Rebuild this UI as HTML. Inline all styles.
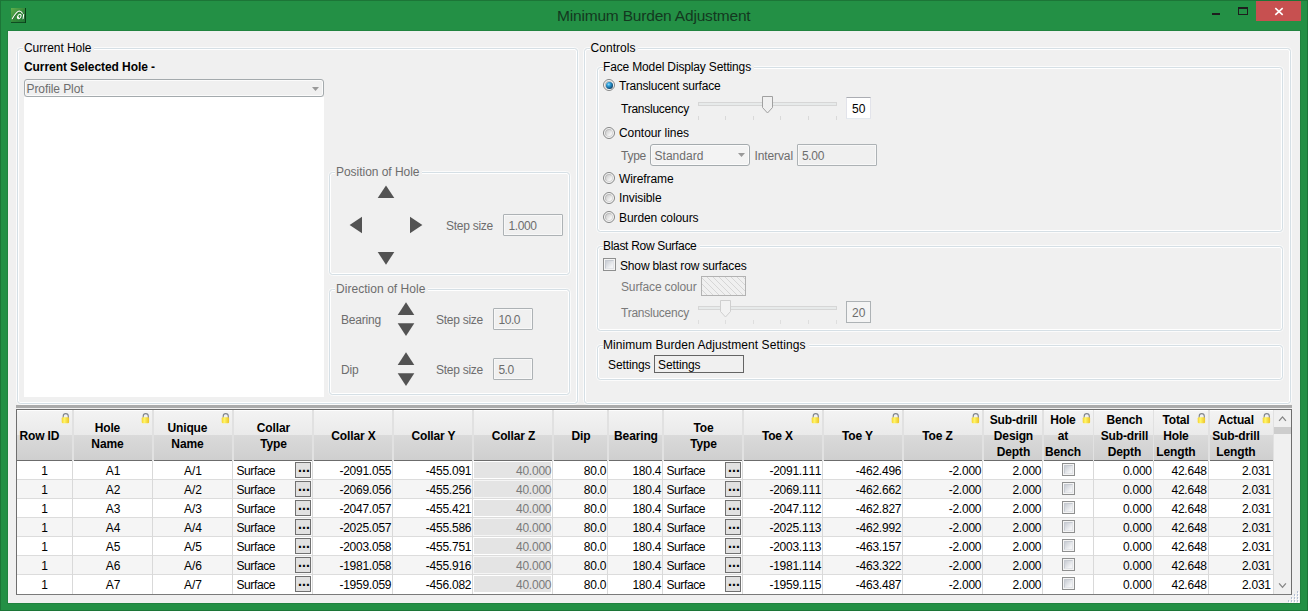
<!DOCTYPE html>
<html><head><meta charset="utf-8"><title>Minimum Burden Adjustment</title>
<style>
html,body{margin:0;padding:0}
body{width:1308px;height:611px;overflow:hidden;position:relative;background:#239045;font-family:"Liberation Sans", sans-serif;font-size:12px;color:#000}
body div,body span.tx,body svg{position:absolute;box-sizing:border-box}
.tx{white-space:nowrap;color:#000}
.b{font-weight:bold}
.g{color:#6d6d6d}
.g2{color:#7a7a7a}
.gb{border:1px solid #fbfbfb;border-radius:4.5px}
.gb i{position:absolute;left:0;top:0;right:0;bottom:0;border:1px solid #d5dfe5;border-radius:3.5px;box-shadow:inset 0 0 0 1px #fff}

.ttl{color:#133820}
.tb{border:1px solid #adb2b5;background:#f0f0f0;box-shadow:inset 0 0 0 1px #f8f8f8;border-radius:1px}
.tri{fill:#535353}
.hdr{background:linear-gradient(#f3f3f3 0,#eaeaea 24px,#dadada 24px,#cfcfcf 49px);border-top:1px solid #fdfdfd;border-bottom:1px solid #6c6c6c}
.cell{border-right:1px solid #d9d9d9}
.btn{border:1px solid #707070;background:#e1e1e1}
.cb{border:1px solid #8e8f8f;background:#f4f4f4}
.cb i{position:absolute;left:1px;top:1px;right:1px;bottom:1px;border:1px solid #c6cad1;border-right-color:#e2e4e8;border-bottom-color:#e2e4e8;background:linear-gradient(135deg,#c8ccd3,#f2f3f5 80%)}
.rad{border-radius:50%;border:1px solid #858686;background:#f7f7f7}
.rad i{position:absolute;left:1px;top:1px;right:1px;bottom:1px;border-radius:50%;border:1px solid #bcbcbc;border-right-color:#d8d8d8;border-bottom-color:#d8d8d8;background:linear-gradient(135deg,#cbcbcb,#f4f4f4 75%)}

</style></head><body>
<div style="left:0px;top:0px;width:1308px;height:611px;border:1px solid #1c7537"></div>
<div style="left:8px;top:31px;width:1292px;height:572px;background:#f0f0f0;box-shadow:0 0 0 1px #20833f"></div>
<svg style="left:11px;top:8px" width="15" height="15" viewBox="0 0 15 15"><defs><linearGradient id="ig" x1="0" y1="0" x2="1" y2="1"><stop offset="0" stop-color="#61b04d"/><stop offset="0.5" stop-color="#34893a"/><stop offset="1" stop-color="#1b7534"/></linearGradient></defs><rect width="15" height="15" fill="url(#ig)"/><rect x="0" y="14" width="15" height="1" fill="#0f4c21"/><rect x="14" y="0" width="1" height="15" fill="#0b3d1a"/><path d="M1.8 11.2 C4 7.4 6.4 3.5 8.9 3.4 C10.2 3.4 11.2 4.4 11.9 5.8 M13.2 6.9 L12.6 11.3" fill="none" stroke="#0c4019" stroke-width="1.1" stroke-linecap="round" opacity="0.55"/><path d="M1.3 10.7 C3.5 6.9 5.9 3 8.4 2.9 C9.7 2.9 10.7 3.9 11.4 5.3 M12.7 6.4 L12.1 10.8" fill="none" stroke="#fff" stroke-width="1.05" stroke-linecap="round"/><ellipse cx="8.3" cy="8.5" rx="1.5" ry="2.3" transform="rotate(30 8.3 8.5)" fill="none" stroke="#fff" stroke-width="0.95"/><ellipse cx="6.9" cy="9.5" rx="1.1" ry="1.0" fill="#fff"/></svg>
<div style="left:1212px;top:13px;width:8px;height:2px;background:#1e1e1e"></div>
<div style="left:1238px;top:7px;width:10px;height:8px;border:1px solid #1e1e1e;border-top-width:2px"></div>
<div style="left:1256px;top:1px;width:45px;height:20px;background:#c75050"></div>
<svg style="left:1274px;top:7px" width="10" height="9" viewBox="0 0 10 9"><path d="M1.3 1.1 L8.7 7.9 M8.7 1.1 L1.3 7.9" stroke="#fff" stroke-width="1.6" fill="none"/></svg>
<div class="gb" style="left:16px;top:47px;width:563px;height:358px"><i></i></div>
<div style="left:23px;top:43px;width:70.5px;height:10px;background:#f0f0f0"></div>
<div style="left:24px;top:79px;width:300px;height:18px;border:1px solid #a4aaad;border-radius:3px;background:#f0f0f0;box-shadow:inset 0 0 0 1px #fbfbfb"></div>
<svg style="left:312px;top:87px" width="7" height="4" viewBox="0 0 7 4"><path d="M0 0 L7 0 L3.5 4 Z" fill="#999"/></svg>
<div style="left:24px;top:97px;width:300px;height:300px;background:#fff"></div>
<div class="gb" style="left:328px;top:171px;width:243px;height:105px"><i></i></div>
<div style="left:335px;top:167px;width:86.5px;height:10px;background:#f0f0f0"></div>
<div class="tb" style="left:503px;top:214px;width:60px;height:22px;"></div>
<div class="gb" style="left:328px;top:288px;width:243px;height:108px"><i></i></div>
<div style="left:335px;top:284px;width:92.5px;height:10px;background:#f0f0f0"></div>
<div class="tb" style="left:493px;top:308px;width:40px;height:22px;"></div>
<div class="tb" style="left:493px;top:358px;width:40px;height:22px;"></div>
<svg style="left:0;top:0" width="1308" height="611"><polygon class="tri" points="386,185.5 394.3,198 377.7,198"/><polygon class="tri" points="386,264.8 394.3,252 377.7,252"/><polygon class="tri" points="349.6,225 362,216.8 362,233.2"/><polygon class="tri" points="422.4,225 410,216.8 410,233.2"/><polygon class="tri" points="406,302.3 414.3,315 397.7,315"/><polygon class="tri" points="406,336 414.3,323.2 397.7,323.2"/><polygon class="tri" points="406,352.3 414.3,365 397.7,365"/><polygon class="tri" points="406,386 414.3,373.2 397.7,373.2"/></svg>
<div class="gb" style="left:583px;top:47px;width:709px;height:358px"><i></i></div>
<div style="left:590px;top:43px;width:48px;height:10px;background:#f0f0f0"></div>
<div class="gb" style="left:596px;top:66px;width:688px;height:167px"><i></i></div>
<div style="left:603px;top:62px;width:151px;height:10px;background:#f0f0f0"></div>
<div class="rad" style="left:603px;top:79px;width:12px;height:12px;"><i></i></div>
<div style="left:605.5px;top:81.5px;width:7px;height:7px;border-radius:50%;background:radial-gradient(circle at 38% 34%,#8edcff 0,#2f9fd8 26%,#1a6ea3 52%,#113e5f 76%,#1e425c 100%)"></div>
<div style="left:698px;top:102px;width:139px;height:4px;border:1px solid #d6d6d6;background:#e7eaea"></div>
<svg style="left:762px;top:96px" width="11" height="18" viewBox="0 0 11 18"><path d="M0.5 0.5 H10.5 V11.5 L5.5 17 L0.5 11.5 Z" fill="#f0f0f0" stroke="#a0a0a0"/></svg>
<div style="left:698px;top:116px;width:1px;height:4px;background:#d9d9d9"></div>
<div style="left:725px;top:116px;width:1px;height:4px;background:#d9d9d9"></div>
<div style="left:753px;top:116px;width:1px;height:4px;background:#d9d9d9"></div>
<div style="left:780px;top:116px;width:1px;height:4px;background:#d9d9d9"></div>
<div style="left:808px;top:116px;width:1px;height:4px;background:#d9d9d9"></div>
<div style="left:836px;top:116px;width:1px;height:4px;background:#d9d9d9"></div>
<div style="left:846px;top:97px;width:25px;height:22px;border:1px solid #e2e3ea;border-top-color:#abadb3;border-bottom-color:#e3e9ef;background:#fff"></div>
<div class="rad" style="left:603px;top:127px;width:12px;height:12px;"><i></i></div>
<div style="left:650px;top:144px;width:100px;height:22px;border:1px solid #a4aaad;border-radius:3px;background:#f3f3f3;box-shadow:inset 0 0 0 1px #fbfbfb"></div>
<svg style="left:738px;top:153px" width="7" height="4" viewBox="0 0 7 4"><path d="M0 0 L7 0 L3.5 4 Z" fill="#999"/></svg>
<div class="tb" style="left:797px;top:144px;width:80px;height:22px;"></div>
<div class="rad" style="left:603px;top:172px;width:12px;height:12px;"><i></i></div>
<div class="rad" style="left:603px;top:191.5px;width:12px;height:12px;"><i></i></div>
<div class="rad" style="left:603px;top:211px;width:12px;height:12px;"><i></i></div>
<div class="gb" style="left:596px;top:245px;width:688px;height:87px"><i></i></div>
<div style="left:603px;top:241px;width:96.5px;height:10px;background:#f0f0f0"></div>
<div class="cb" style="left:603px;top:258px;width:13px;height:13px;"><i></i></div>
<div style="left:701px;top:276px;width:45px;height:20px;border:1px solid #b2b2b2;background:repeating-linear-gradient(45deg,#f0f0f0 0,#f0f0f0 3.34px,#d6d6d6 3.34px,#d6d6d6 4.24px)"></div>
<div style="left:698px;top:306px;width:139px;height:4px;border:1px solid #d6d6d6;background:#e7eaea"></div>
<svg style="left:720px;top:300px" width="11" height="18" viewBox="0 0 11 18"><path d="M0.5 0.5 H10.5 V11.5 L5.5 17 L0.5 11.5 Z" fill="#f2f2f2" stroke="#cfcfcf"/></svg>
<div style="left:698px;top:320px;width:1px;height:4px;background:#dedede"></div>
<div style="left:725px;top:320px;width:1px;height:4px;background:#dedede"></div>
<div style="left:753px;top:320px;width:1px;height:4px;background:#dedede"></div>
<div style="left:780px;top:320px;width:1px;height:4px;background:#dedede"></div>
<div style="left:808px;top:320px;width:1px;height:4px;background:#dedede"></div>
<div style="left:836px;top:320px;width:1px;height:4px;background:#dedede"></div>
<div style="left:846px;top:301px;width:25px;height:22px;border:1px solid #adb2b5;background:#f4f4f4"></div>
<div class="gb" style="left:596px;top:344px;width:688px;height:37px"><i></i></div>
<div style="left:603px;top:340px;width:205.5px;height:10px;background:#f0f0f0"></div>
<div style="left:654px;top:355px;width:90px;height:18px;border:1px solid #646464;background:#f0f0f0"></div>
<div style="left:16px;top:405px;width:1276px;height:3px;background:#ababab"></div>
<div style="left:16px;top:409px;width:1276px;height:186px;border:1px solid #6e6e6e;border-bottom-color:#7a7a7a;background:#fff"></div>
<div style="left:17px;top:410px;width:1257px;height:51px;background:#e1e1e1"></div>
<div class="hdr" style="left:17px;top:410px;width:55px;height:51px;"></div>
<svg style="left:61px;top:413px" width="9" height="11" viewBox="0 0 9 11"><defs><linearGradient id="lk0" x1="0" y1="0" x2="1" y2="0"><stop offset="0" stop-color="#f5d033"/><stop offset="0.35" stop-color="#fff766"/><stop offset="1" stop-color="#ecc22a"/></linearGradient></defs><path d="M2.2 5 V3.2 C2.2 -0.2 7.3 -0.2 7.3 3.2 V5" fill="none" stroke="#80858c" stroke-width="1.1"/><rect x="0.7" y="4.2" width="7.4" height="6" rx="1.2" fill="url(#lk0)"/></svg>
<div class="hdr" style="left:74px;top:410px;width:78px;height:51px;"></div>
<svg style="left:141px;top:413px" width="9" height="11" viewBox="0 0 9 11"><defs><linearGradient id="lk1" x1="0" y1="0" x2="1" y2="0"><stop offset="0" stop-color="#f5d033"/><stop offset="0.35" stop-color="#fff766"/><stop offset="1" stop-color="#ecc22a"/></linearGradient></defs><path d="M2.2 5 V3.2 C2.2 -0.2 7.3 -0.2 7.3 3.2 V5" fill="none" stroke="#80858c" stroke-width="1.1"/><rect x="0.7" y="4.2" width="7.4" height="6" rx="1.2" fill="url(#lk1)"/></svg>
<div class="hdr" style="left:154px;top:410px;width:78px;height:51px;"></div>
<svg style="left:221px;top:413px" width="9" height="11" viewBox="0 0 9 11"><defs><linearGradient id="lk2" x1="0" y1="0" x2="1" y2="0"><stop offset="0" stop-color="#f5d033"/><stop offset="0.35" stop-color="#fff766"/><stop offset="1" stop-color="#ecc22a"/></linearGradient></defs><path d="M2.2 5 V3.2 C2.2 -0.2 7.3 -0.2 7.3 3.2 V5" fill="none" stroke="#80858c" stroke-width="1.1"/><rect x="0.7" y="4.2" width="7.4" height="6" rx="1.2" fill="url(#lk2)"/></svg>
<div class="hdr" style="left:234px;top:410px;width:78px;height:51px;"></div>
<div class="hdr" style="left:314px;top:410px;width:78px;height:51px;"></div>
<div class="hdr" style="left:394px;top:410px;width:78px;height:51px;"></div>
<div class="hdr" style="left:474px;top:410px;width:78px;height:51px;"></div>
<div class="hdr" style="left:554px;top:410px;width:53px;height:51px;"></div>
<div class="hdr" style="left:609px;top:410px;width:53px;height:51px;"></div>
<div class="hdr" style="left:664px;top:410px;width:78px;height:51px;"></div>
<div class="hdr" style="left:744px;top:410px;width:78px;height:51px;"></div>
<svg style="left:811px;top:413px" width="9" height="11" viewBox="0 0 9 11"><defs><linearGradient id="lk10" x1="0" y1="0" x2="1" y2="0"><stop offset="0" stop-color="#f5d033"/><stop offset="0.35" stop-color="#fff766"/><stop offset="1" stop-color="#ecc22a"/></linearGradient></defs><path d="M2.2 5 V3.2 C2.2 -0.2 7.3 -0.2 7.3 3.2 V5" fill="none" stroke="#80858c" stroke-width="1.1"/><rect x="0.7" y="4.2" width="7.4" height="6" rx="1.2" fill="url(#lk10)"/></svg>
<div class="hdr" style="left:824px;top:410px;width:78px;height:51px;"></div>
<svg style="left:891px;top:413px" width="9" height="11" viewBox="0 0 9 11"><defs><linearGradient id="lk11" x1="0" y1="0" x2="1" y2="0"><stop offset="0" stop-color="#f5d033"/><stop offset="0.35" stop-color="#fff766"/><stop offset="1" stop-color="#ecc22a"/></linearGradient></defs><path d="M2.2 5 V3.2 C2.2 -0.2 7.3 -0.2 7.3 3.2 V5" fill="none" stroke="#80858c" stroke-width="1.1"/><rect x="0.7" y="4.2" width="7.4" height="6" rx="1.2" fill="url(#lk11)"/></svg>
<div class="hdr" style="left:904px;top:410px;width:78px;height:51px;"></div>
<svg style="left:971px;top:413px" width="9" height="11" viewBox="0 0 9 11"><defs><linearGradient id="lk12" x1="0" y1="0" x2="1" y2="0"><stop offset="0" stop-color="#f5d033"/><stop offset="0.35" stop-color="#fff766"/><stop offset="1" stop-color="#ecc22a"/></linearGradient></defs><path d="M2.2 5 V3.2 C2.2 -0.2 7.3 -0.2 7.3 3.2 V5" fill="none" stroke="#80858c" stroke-width="1.1"/><rect x="0.7" y="4.2" width="7.4" height="6" rx="1.2" fill="url(#lk12)"/></svg>
<div class="hdr" style="left:984px;top:410px;width:58px;height:51px;"></div>
<div class="hdr" style="left:1044px;top:410px;width:49px;height:51px;"></div>
<svg style="left:1082px;top:413px" width="9" height="11" viewBox="0 0 9 11"><defs><linearGradient id="lk14" x1="0" y1="0" x2="1" y2="0"><stop offset="0" stop-color="#f5d033"/><stop offset="0.35" stop-color="#fff766"/><stop offset="1" stop-color="#ecc22a"/></linearGradient></defs><path d="M2.2 5 V3.2 C2.2 -0.2 7.3 -0.2 7.3 3.2 V5" fill="none" stroke="#80858c" stroke-width="1.1"/><rect x="0.7" y="4.2" width="7.4" height="6" rx="1.2" fill="url(#lk14)"/></svg>
<div class="hdr" style="left:1094px;top:410px;width:59px;height:51px;"></div>
<div class="hdr" style="left:1154px;top:410px;width:54px;height:51px;"></div>
<svg style="left:1197px;top:413px" width="9" height="11" viewBox="0 0 9 11"><defs><linearGradient id="lk16" x1="0" y1="0" x2="1" y2="0"><stop offset="0" stop-color="#f5d033"/><stop offset="0.35" stop-color="#fff766"/><stop offset="1" stop-color="#ecc22a"/></linearGradient></defs><path d="M2.2 5 V3.2 C2.2 -0.2 7.3 -0.2 7.3 3.2 V5" fill="none" stroke="#80858c" stroke-width="1.1"/><rect x="0.7" y="4.2" width="7.4" height="6" rx="1.2" fill="url(#lk16)"/></svg>
<div class="hdr" style="left:1210px;top:410px;width:63px;height:51px;"></div>
<svg style="left:1262px;top:413px" width="9" height="11" viewBox="0 0 9 11"><defs><linearGradient id="lk17" x1="0" y1="0" x2="1" y2="0"><stop offset="0" stop-color="#f5d033"/><stop offset="0.35" stop-color="#fff766"/><stop offset="1" stop-color="#ecc22a"/></linearGradient></defs><path d="M2.2 5 V3.2 C2.2 -0.2 7.3 -0.2 7.3 3.2 V5" fill="none" stroke="#80858c" stroke-width="1.1"/><rect x="0.7" y="4.2" width="7.4" height="6" rx="1.2" fill="url(#lk17)"/></svg>
<div style="left:1274px;top:410px;width:17px;height:184px;background:#f0f0f0"></div>
<div style="left:1274px;top:427px;width:17px;height:7px;background:#cdcdcd"></div>
<svg style="left:1278px;top:415px" width="9" height="7" viewBox="0 0 9 7"><path d="M1.1 5.9 L4.5 1.9 L7.9 5.9" fill="none" stroke="#858585" stroke-width="1.3"/></svg>
<svg style="left:1278px;top:582px" width="9" height="7" viewBox="0 0 9 7"><path d="M1.1 1.3 L4.5 5.3 L7.9 1.3" fill="none" stroke="#858585" stroke-width="1.3"/></svg>
<div style="left:17px;top:461px;width:1257px;height:18px;background:#fff"></div>
<div style="left:17px;top:479px;width:1257px;height:1px;background:#dcdcdc"></div>
<div class="btn" style="left:295px;top:462px;width:16px;height:16px;"></div>
<span class="tx b" style="left:298px;top:460px;font-size:14px;line-height:14px;letter-spacing:.1px">...</span>
<div style="left:474px;top:462px;width:77px;height:16px;background:#e4e4e4"></div>
<div class="btn" style="left:725px;top:462px;width:16px;height:16px;"></div>
<span class="tx b" style="left:728px;top:460px;font-size:14px;line-height:14px;letter-spacing:.1px">...</span>
<div class="cb" style="left:1062px;top:463px;width:13px;height:13px;"><i></i></div>
<div style="left:17px;top:480px;width:1257px;height:18px;background:#f5f5f5"></div>
<div style="left:17px;top:498px;width:1257px;height:1px;background:#dcdcdc"></div>
<div class="btn" style="left:295px;top:481px;width:16px;height:16px;"></div>
<span class="tx b" style="left:298px;top:479px;font-size:14px;line-height:14px;letter-spacing:.1px">...</span>
<div style="left:474px;top:481px;width:77px;height:16px;background:#e4e4e4"></div>
<div class="btn" style="left:725px;top:481px;width:16px;height:16px;"></div>
<span class="tx b" style="left:728px;top:479px;font-size:14px;line-height:14px;letter-spacing:.1px">...</span>
<div class="cb" style="left:1062px;top:482px;width:13px;height:13px;"><i></i></div>
<div style="left:17px;top:499px;width:1257px;height:18px;background:#fff"></div>
<div style="left:17px;top:517px;width:1257px;height:1px;background:#dcdcdc"></div>
<div class="btn" style="left:295px;top:500px;width:16px;height:16px;"></div>
<span class="tx b" style="left:298px;top:498px;font-size:14px;line-height:14px;letter-spacing:.1px">...</span>
<div style="left:474px;top:500px;width:77px;height:16px;background:#e4e4e4"></div>
<div class="btn" style="left:725px;top:500px;width:16px;height:16px;"></div>
<span class="tx b" style="left:728px;top:498px;font-size:14px;line-height:14px;letter-spacing:.1px">...</span>
<div class="cb" style="left:1062px;top:501px;width:13px;height:13px;"><i></i></div>
<div style="left:17px;top:518px;width:1257px;height:18px;background:#f5f5f5"></div>
<div style="left:17px;top:536px;width:1257px;height:1px;background:#dcdcdc"></div>
<div class="btn" style="left:295px;top:519px;width:16px;height:16px;"></div>
<span class="tx b" style="left:298px;top:517px;font-size:14px;line-height:14px;letter-spacing:.1px">...</span>
<div style="left:474px;top:519px;width:77px;height:16px;background:#e4e4e4"></div>
<div class="btn" style="left:725px;top:519px;width:16px;height:16px;"></div>
<span class="tx b" style="left:728px;top:517px;font-size:14px;line-height:14px;letter-spacing:.1px">...</span>
<div class="cb" style="left:1062px;top:520px;width:13px;height:13px;"><i></i></div>
<div style="left:17px;top:537px;width:1257px;height:18px;background:#fff"></div>
<div style="left:17px;top:555px;width:1257px;height:1px;background:#dcdcdc"></div>
<div class="btn" style="left:295px;top:538px;width:16px;height:16px;"></div>
<span class="tx b" style="left:298px;top:536px;font-size:14px;line-height:14px;letter-spacing:.1px">...</span>
<div style="left:474px;top:538px;width:77px;height:16px;background:#e4e4e4"></div>
<div class="btn" style="left:725px;top:538px;width:16px;height:16px;"></div>
<span class="tx b" style="left:728px;top:536px;font-size:14px;line-height:14px;letter-spacing:.1px">...</span>
<div class="cb" style="left:1062px;top:539px;width:13px;height:13px;"><i></i></div>
<div style="left:17px;top:556px;width:1257px;height:18px;background:#f5f5f5"></div>
<div style="left:17px;top:574px;width:1257px;height:1px;background:#dcdcdc"></div>
<div class="btn" style="left:295px;top:557px;width:16px;height:16px;"></div>
<span class="tx b" style="left:298px;top:555px;font-size:14px;line-height:14px;letter-spacing:.1px">...</span>
<div style="left:474px;top:557px;width:77px;height:16px;background:#e4e4e4"></div>
<div class="btn" style="left:725px;top:557px;width:16px;height:16px;"></div>
<span class="tx b" style="left:728px;top:555px;font-size:14px;line-height:14px;letter-spacing:.1px">...</span>
<div class="cb" style="left:1062px;top:558px;width:13px;height:13px;"><i></i></div>
<div style="left:17px;top:575px;width:1257px;height:19px;background:#fff"></div>
<div class="btn" style="left:295px;top:576px;width:16px;height:16px;"></div>
<span class="tx b" style="left:298px;top:574px;font-size:14px;line-height:14px;letter-spacing:.1px">...</span>
<div style="left:474px;top:576px;width:77px;height:16px;background:#e4e4e4"></div>
<div class="btn" style="left:725px;top:576px;width:16px;height:16px;"></div>
<span class="tx b" style="left:728px;top:574px;font-size:14px;line-height:14px;letter-spacing:.1px">...</span>
<div class="cb" style="left:1062px;top:577px;width:13px;height:13px;"><i></i></div>
<div style="left:72px;top:461px;width:1px;height:133px;background:#d9d9d9"></div>
<div style="left:152px;top:461px;width:1px;height:133px;background:#d9d9d9"></div>
<div style="left:232px;top:461px;width:1px;height:133px;background:#d9d9d9"></div>
<div style="left:312px;top:461px;width:1px;height:133px;background:#d9d9d9"></div>
<div style="left:392px;top:461px;width:1px;height:133px;background:#d9d9d9"></div>
<div style="left:472px;top:461px;width:1px;height:133px;background:#d9d9d9"></div>
<div style="left:552px;top:461px;width:1px;height:133px;background:#d9d9d9"></div>
<div style="left:607px;top:461px;width:1px;height:133px;background:#d9d9d9"></div>
<div style="left:662px;top:461px;width:1px;height:133px;background:#d9d9d9"></div>
<div style="left:742px;top:461px;width:1px;height:133px;background:#d9d9d9"></div>
<div style="left:822px;top:461px;width:1px;height:133px;background:#d9d9d9"></div>
<div style="left:902px;top:461px;width:1px;height:133px;background:#d9d9d9"></div>
<div style="left:982px;top:461px;width:1px;height:133px;background:#d9d9d9"></div>
<div style="left:1042px;top:461px;width:1px;height:133px;background:#d9d9d9"></div>
<div style="left:1093px;top:461px;width:1px;height:133px;background:#d9d9d9"></div>
<div style="left:1153px;top:461px;width:1px;height:133px;background:#d9d9d9"></div>
<div style="left:1208px;top:461px;width:1px;height:133px;background:#d9d9d9"></div>
<div style="left:1273px;top:461px;width:1px;height:133px;background:#d9d9d9"></div>
<div style="left:1297px;top:591px;width:1px;height:2px;background:#b4c0d4;box-shadow:1px 1px 0 #fff"></div>
<div style="left:1297px;top:594px;width:1px;height:2px;background:#b4c0d4;box-shadow:1px 1px 0 #fff"></div>
<div style="left:1294px;top:594px;width:1px;height:2px;background:#b4c0d4;box-shadow:1px 1px 0 #fff"></div>
<div style="left:1297px;top:597px;width:1px;height:2px;background:#b4c0d4;box-shadow:1px 1px 0 #fff"></div>
<div style="left:1294px;top:597px;width:1px;height:2px;background:#b4c0d4;box-shadow:1px 1px 0 #fff"></div>
<div style="left:1291px;top:597px;width:1px;height:2px;background:#b4c0d4;box-shadow:1px 1px 0 #fff"></div>
<div style="left:1297px;top:600px;width:1px;height:2px;background:#b4c0d4;box-shadow:1px 1px 0 #fff"></div>
<div style="left:1294px;top:600px;width:1px;height:2px;background:#b4c0d4;box-shadow:1px 1px 0 #fff"></div>
<div style="left:1291px;top:600px;width:1px;height:2px;background:#b4c0d4;box-shadow:1px 1px 0 #fff"></div>
<div style="left:1288px;top:600px;width:1px;height:2px;background:#b4c0d4;box-shadow:1px 1px 0 #fff"></div>
<span id="t0" class="tx ttl" style="top:6px;font-size:15.5px;line-height:19.5px;letter-spacing:-0.186px;left:557px;">Minimum Burden Adjustment</span>
<span id="t1" class="tx" style="top:40px;font-size:12px;line-height:16px;letter-spacing:-0.044px;left:24px;">Current Hole</span>
<span id="t2" class="tx b" style="top:59px;font-size:12px;line-height:16px;letter-spacing:-0.074px;left:24px;">Current Selected Hole -</span>
<span id="t3" class="tx g" style="top:81px;font-size:12px;line-height:16px;letter-spacing:-0.086px;left:26.5px;">Profile Plot</span>
<span id="t4" class="tx g" style="top:164px;font-size:12px;line-height:16px;letter-spacing:-0.034px;left:336px;">Position of Hole</span>
<span id="t5" class="tx g" style="top:218px;font-size:12px;line-height:16px;letter-spacing:-0.262px;left:446px;">Step size</span>
<span id="t6" class="tx g" style="top:218px;font-size:12px;line-height:16px;letter-spacing:-0.406px;left:508.5px;">1.000</span>
<span id="t7" class="tx g" style="top:281px;font-size:12px;line-height:16px;letter-spacing:0.046px;left:336px;">Direction of Hole</span>
<span id="t8" class="tx g" style="top:312px;font-size:12px;line-height:16px;letter-spacing:-0.196px;left:341px;">Bearing</span>
<span id="t9" class="tx g" style="top:312px;font-size:12px;line-height:16px;letter-spacing:-0.262px;left:436px;">Step size</span>
<span id="t10" class="tx g" style="top:312px;font-size:12px;line-height:16px;letter-spacing:-0.465px;left:498.5px;">10.0</span>
<span id="t11" class="tx g" style="top:362px;font-size:12px;line-height:16px;letter-spacing:-0.172px;left:341px;">Dip</span>
<span id="t12" class="tx g" style="top:362px;font-size:12px;line-height:16px;letter-spacing:-0.262px;left:436px;">Step size</span>
<span id="t13" class="tx g" style="top:362px;font-size:12px;line-height:16px;letter-spacing:-0.562px;left:498.5px;">5.0</span>
<span id="t14" class="tx" style="top:40px;font-size:12px;line-height:16px;letter-spacing:0.039px;left:590.5px;">Controls</span>
<span id="t15" class="tx" style="top:59px;font-size:12px;line-height:16px;letter-spacing:-0.151px;left:603px;">Face Model Display Settings</span>
<span id="t16" class="tx" style="top:78px;font-size:12px;line-height:16px;letter-spacing:-0.181px;left:619px;">Translucent surface</span>
<span id="t17" class="tx" style="top:101px;font-size:12px;line-height:16px;letter-spacing:-0.243px;left:621px;">Translucency</span>
<span id="t18" class="tx" style="top:101px;font-size:12px;line-height:16px;letter-spacing:0.070px;left:852px;">50</span>
<span id="t19" class="tx" style="top:125px;font-size:12px;line-height:16px;letter-spacing:-0.055px;left:619px;">Contour lines</span>
<span id="t20" class="tx g" style="top:148px;font-size:12px;line-height:16px;letter-spacing:-0.254px;left:621px;">Type</span>
<span id="t21" class="tx g" style="top:148px;font-size:12px;line-height:16px;letter-spacing:0.037px;left:654.5px;">Standard</span>
<span id="t22" class="tx g" style="top:148px;font-size:12px;line-height:16px;letter-spacing:-0.107px;left:754.5px;">Interval</span>
<span id="t23" class="tx g" style="top:148px;font-size:12px;line-height:16px;letter-spacing:-0.340px;left:802px;">5.00</span>
<span id="t24" class="tx" style="top:171px;font-size:12px;line-height:16px;letter-spacing:-0.094px;left:619px;">Wireframe</span>
<span id="t25" class="tx" style="top:190px;font-size:12px;line-height:16px;letter-spacing:-0.095px;left:619px;">Invisible</span>
<span id="t26" class="tx" style="top:210px;font-size:12px;line-height:16px;letter-spacing:-0.087px;left:619px;">Burden colours</span>
<span id="t27" class="tx" style="top:238px;font-size:12px;line-height:16px;letter-spacing:-0.307px;left:603px;">Blast Row Surface</span>
<span id="t28" class="tx" style="top:258px;font-size:12px;line-height:16px;letter-spacing:-0.155px;left:620px;">Show blast row surfaces</span>
<span id="t29" class="tx g2" style="top:279px;font-size:12px;line-height:16px;letter-spacing:-0.134px;left:621px;">Surface colour</span>
<span id="t30" class="tx g2" style="top:305px;font-size:12px;line-height:16px;letter-spacing:-0.243px;left:621px;">Translucency</span>
<span id="t31" class="tx g" style="top:305px;font-size:12px;line-height:16px;letter-spacing:0.070px;left:852px;">20</span>
<span id="t32" class="tx" style="top:337px;font-size:12px;line-height:16px;letter-spacing:0.071px;left:603px;">Minimum Burden Adjustment Settings</span>
<span id="t33" class="tx" style="top:356.5px;font-size:12px;line-height:16px;letter-spacing:-0.107px;left:608px;">Settings</span>
<span id="t34" class="tx" style="top:356.5px;font-size:12px;line-height:16px;letter-spacing:-0.107px;left:658px;">Settings</span>
<span id="t35" class="tx b" style="top:427.5px;font-size:12px;line-height:16px;letter-spacing:-0.14px;left:39.43px;width:0;display:flex;justify-content:center;">Row ID</span>
<span id="t36" class="tx b" style="top:420px;font-size:12px;line-height:16px;letter-spacing:-0.14px;left:107.43px;width:0;display:flex;justify-content:center;">Hole</span>
<span id="t37" class="tx b" style="top:436px;font-size:12px;line-height:16px;letter-spacing:-0.14px;left:107.43px;width:0;display:flex;justify-content:center;">Name</span>
<span id="t38" class="tx b" style="top:420px;font-size:12px;line-height:16px;letter-spacing:-0.14px;left:187.43px;width:0;display:flex;justify-content:center;">Unique</span>
<span id="t39" class="tx b" style="top:436px;font-size:12px;line-height:16px;letter-spacing:-0.14px;left:187.43px;width:0;display:flex;justify-content:center;">Name</span>
<span id="t40" class="tx b" style="top:420px;font-size:12px;line-height:16px;letter-spacing:-0.14px;left:273.43px;width:0;display:flex;justify-content:center;">Collar</span>
<span id="t41" class="tx b" style="top:436px;font-size:12px;line-height:16px;letter-spacing:-0.14px;left:273.43px;width:0;display:flex;justify-content:center;">Type</span>
<span id="t42" class="tx b" style="top:427.5px;font-size:12px;line-height:16px;letter-spacing:-0.14px;left:353.43px;width:0;display:flex;justify-content:center;">Collar X</span>
<span id="t43" class="tx b" style="top:427.5px;font-size:12px;line-height:16px;letter-spacing:-0.14px;left:433.43px;width:0;display:flex;justify-content:center;">Collar Y</span>
<span id="t44" class="tx b" style="top:427.5px;font-size:12px;line-height:16px;letter-spacing:-0.14px;left:513.43px;width:0;display:flex;justify-content:center;">Collar Z</span>
<span id="t45" class="tx b" style="top:427.5px;font-size:12px;line-height:16px;letter-spacing:-0.14px;left:580.93px;width:0;display:flex;justify-content:center;">Dip</span>
<span id="t46" class="tx b" style="top:427.5px;font-size:12px;line-height:16px;letter-spacing:-0.14px;left:635.93px;width:0;display:flex;justify-content:center;">Bearing</span>
<span id="t47" class="tx b" style="top:420px;font-size:12px;line-height:16px;letter-spacing:-0.14px;left:703.43px;width:0;display:flex;justify-content:center;">Toe</span>
<span id="t48" class="tx b" style="top:436px;font-size:12px;line-height:16px;letter-spacing:-0.14px;left:703.43px;width:0;display:flex;justify-content:center;">Type</span>
<span id="t49" class="tx b" style="top:427.5px;font-size:12px;line-height:16px;letter-spacing:-0.14px;left:777.43px;width:0;display:flex;justify-content:center;">Toe X</span>
<span id="t50" class="tx b" style="top:427.5px;font-size:12px;line-height:16px;letter-spacing:-0.14px;left:857.43px;width:0;display:flex;justify-content:center;">Toe Y</span>
<span id="t51" class="tx b" style="top:427.5px;font-size:12px;line-height:16px;letter-spacing:-0.14px;left:937.43px;width:0;display:flex;justify-content:center;">Toe Z</span>
<span id="t52" class="tx b" style="top:412px;font-size:12px;line-height:16px;letter-spacing:-0.14px;left:1013.43px;width:0;display:flex;justify-content:center;">Sub-drill</span>
<span id="t53" class="tx b" style="top:428px;font-size:12px;line-height:16px;letter-spacing:-0.14px;left:1013.43px;width:0;display:flex;justify-content:center;">Design</span>
<span id="t54" class="tx b" style="top:444px;font-size:12px;line-height:16px;letter-spacing:-0.14px;left:1013.43px;width:0;display:flex;justify-content:center;">Depth</span>
<span id="t55" class="tx b" style="top:412px;font-size:12px;line-height:16px;letter-spacing:-0.14px;left:1062.93px;width:0;display:flex;justify-content:center;">Hole</span>
<span id="t56" class="tx b" style="top:428px;font-size:12px;line-height:16px;letter-spacing:-0.14px;left:1062.93px;width:0;display:flex;justify-content:center;">at</span>
<span id="t57" class="tx b" style="top:444px;font-size:12px;line-height:16px;letter-spacing:-0.14px;left:1062.93px;width:0;display:flex;justify-content:center;">Bench</span>
<span id="t58" class="tx b" style="top:412px;font-size:12px;line-height:16px;letter-spacing:-0.14px;left:1124.43px;width:0;display:flex;justify-content:center;">Bench</span>
<span id="t59" class="tx b" style="top:428px;font-size:12px;line-height:16px;letter-spacing:-0.14px;left:1124.43px;width:0;display:flex;justify-content:center;">Sub-drill</span>
<span id="t60" class="tx b" style="top:444px;font-size:12px;line-height:16px;letter-spacing:-0.14px;left:1124.43px;width:0;display:flex;justify-content:center;">Depth</span>
<span id="t61" class="tx b" style="top:412px;font-size:12px;line-height:16px;letter-spacing:-0.14px;left:1175.93px;width:0;display:flex;justify-content:center;">Total</span>
<span id="t62" class="tx b" style="top:428px;font-size:12px;line-height:16px;letter-spacing:-0.14px;left:1175.93px;width:0;display:flex;justify-content:center;">Hole</span>
<span id="t63" class="tx b" style="top:444px;font-size:12px;line-height:16px;letter-spacing:-0.14px;left:1175.93px;width:0;display:flex;justify-content:center;">Length</span>
<span id="t64" class="tx b" style="top:412px;font-size:12px;line-height:16px;letter-spacing:-0.14px;left:1235.93px;width:0;display:flex;justify-content:center;">Actual</span>
<span id="t65" class="tx b" style="top:428px;font-size:12px;line-height:16px;letter-spacing:-0.14px;left:1235.93px;width:0;display:flex;justify-content:center;">Sub-drill</span>
<span id="t66" class="tx b" style="top:444px;font-size:12px;line-height:16px;letter-spacing:-0.14px;left:1235.93px;width:0;display:flex;justify-content:center;">Length</span>
<span id="t67" class="tx" style="top:462.5px;font-size:12px;line-height:16px;left:44.5px;width:0;display:flex;justify-content:center;">1</span>
<span id="t68" class="tx" style="top:462.5px;font-size:12px;line-height:16px;left:113px;width:0;display:flex;justify-content:center;">A1</span>
<span id="t69" class="tx" style="top:462.5px;font-size:12px;line-height:16px;left:193px;width:0;display:flex;justify-content:center;">A/1</span>
<span id="t70" class="tx" style="top:462.5px;font-size:12px;line-height:16px;letter-spacing:-0.408px;left:236.5px;">Surface</span>
<span id="t71" class="tx" style="top:462.5px;font-size:12px;line-height:16px;letter-spacing:-0.24px;font-kerning:none;right:916.74px;">-2091.055</span>
<span id="t72" class="tx" style="top:462.5px;font-size:12px;line-height:16px;letter-spacing:-0.24px;font-kerning:none;right:836.74px;">-455.091</span>
<span id="t73" class="tx g2" style="top:462.5px;font-size:12px;line-height:16px;letter-spacing:-0.24px;font-kerning:none;right:756.74px;">40.000</span>
<span id="t74" class="tx" style="top:462.5px;font-size:12px;line-height:16px;letter-spacing:-0.24px;font-kerning:none;right:701.74px;">80.0</span>
<span id="t75" class="tx" style="top:462.5px;font-size:12px;line-height:16px;letter-spacing:-0.24px;font-kerning:none;right:646.74px;">180.4</span>
<span id="t76" class="tx" style="top:462.5px;font-size:12px;line-height:16px;letter-spacing:-0.408px;left:666.5px;">Surface</span>
<span id="t77" class="tx" style="top:462.5px;font-size:12px;line-height:16px;letter-spacing:-0.24px;font-kerning:none;right:486.74px;">-2091.111</span>
<span id="t78" class="tx" style="top:462.5px;font-size:12px;line-height:16px;letter-spacing:-0.24px;font-kerning:none;right:406.74px;">-462.496</span>
<span id="t79" class="tx" style="top:462.5px;font-size:12px;line-height:16px;letter-spacing:-0.24px;font-kerning:none;right:326.74px;">-2.000</span>
<span id="t80" class="tx" style="top:462.5px;font-size:12px;line-height:16px;letter-spacing:-0.24px;font-kerning:none;right:266.74px;">2.000</span>
<span id="t81" class="tx" style="top:462.5px;font-size:12px;line-height:16px;letter-spacing:-0.24px;font-kerning:none;right:156.24px;">0.000</span>
<span id="t82" class="tx" style="top:462.5px;font-size:12px;line-height:16px;letter-spacing:-0.24px;font-kerning:none;right:101.24px;">42.648</span>
<span id="t83" class="tx" style="top:462.5px;font-size:12px;line-height:16px;letter-spacing:-0.24px;font-kerning:none;right:37.24px;">2.031</span>
<span id="t84" class="tx" style="top:481.5px;font-size:12px;line-height:16px;left:44.5px;width:0;display:flex;justify-content:center;">1</span>
<span id="t85" class="tx" style="top:481.5px;font-size:12px;line-height:16px;left:113px;width:0;display:flex;justify-content:center;">A2</span>
<span id="t86" class="tx" style="top:481.5px;font-size:12px;line-height:16px;left:193px;width:0;display:flex;justify-content:center;">A/2</span>
<span id="t87" class="tx" style="top:481.5px;font-size:12px;line-height:16px;letter-spacing:-0.408px;left:236.5px;">Surface</span>
<span id="t88" class="tx" style="top:481.5px;font-size:12px;line-height:16px;letter-spacing:-0.24px;font-kerning:none;right:916.74px;">-2069.056</span>
<span id="t89" class="tx" style="top:481.5px;font-size:12px;line-height:16px;letter-spacing:-0.24px;font-kerning:none;right:836.74px;">-455.256</span>
<span id="t90" class="tx g2" style="top:481.5px;font-size:12px;line-height:16px;letter-spacing:-0.24px;font-kerning:none;right:756.74px;">40.000</span>
<span id="t91" class="tx" style="top:481.5px;font-size:12px;line-height:16px;letter-spacing:-0.24px;font-kerning:none;right:701.74px;">80.0</span>
<span id="t92" class="tx" style="top:481.5px;font-size:12px;line-height:16px;letter-spacing:-0.24px;font-kerning:none;right:646.74px;">180.4</span>
<span id="t93" class="tx" style="top:481.5px;font-size:12px;line-height:16px;letter-spacing:-0.408px;left:666.5px;">Surface</span>
<span id="t94" class="tx" style="top:481.5px;font-size:12px;line-height:16px;letter-spacing:-0.24px;font-kerning:none;right:486.74px;">-2069.111</span>
<span id="t95" class="tx" style="top:481.5px;font-size:12px;line-height:16px;letter-spacing:-0.24px;font-kerning:none;right:406.74px;">-462.662</span>
<span id="t96" class="tx" style="top:481.5px;font-size:12px;line-height:16px;letter-spacing:-0.24px;font-kerning:none;right:326.74px;">-2.000</span>
<span id="t97" class="tx" style="top:481.5px;font-size:12px;line-height:16px;letter-spacing:-0.24px;font-kerning:none;right:266.74px;">2.000</span>
<span id="t98" class="tx" style="top:481.5px;font-size:12px;line-height:16px;letter-spacing:-0.24px;font-kerning:none;right:156.24px;">0.000</span>
<span id="t99" class="tx" style="top:481.5px;font-size:12px;line-height:16px;letter-spacing:-0.24px;font-kerning:none;right:101.24px;">42.648</span>
<span id="t100" class="tx" style="top:481.5px;font-size:12px;line-height:16px;letter-spacing:-0.24px;font-kerning:none;right:37.24px;">2.031</span>
<span id="t101" class="tx" style="top:500.5px;font-size:12px;line-height:16px;left:44.5px;width:0;display:flex;justify-content:center;">1</span>
<span id="t102" class="tx" style="top:500.5px;font-size:12px;line-height:16px;left:113px;width:0;display:flex;justify-content:center;">A3</span>
<span id="t103" class="tx" style="top:500.5px;font-size:12px;line-height:16px;left:193px;width:0;display:flex;justify-content:center;">A/3</span>
<span id="t104" class="tx" style="top:500.5px;font-size:12px;line-height:16px;letter-spacing:-0.408px;left:236.5px;">Surface</span>
<span id="t105" class="tx" style="top:500.5px;font-size:12px;line-height:16px;letter-spacing:-0.24px;font-kerning:none;right:916.74px;">-2047.057</span>
<span id="t106" class="tx" style="top:500.5px;font-size:12px;line-height:16px;letter-spacing:-0.24px;font-kerning:none;right:836.74px;">-455.421</span>
<span id="t107" class="tx g2" style="top:500.5px;font-size:12px;line-height:16px;letter-spacing:-0.24px;font-kerning:none;right:756.74px;">40.000</span>
<span id="t108" class="tx" style="top:500.5px;font-size:12px;line-height:16px;letter-spacing:-0.24px;font-kerning:none;right:701.74px;">80.0</span>
<span id="t109" class="tx" style="top:500.5px;font-size:12px;line-height:16px;letter-spacing:-0.24px;font-kerning:none;right:646.74px;">180.4</span>
<span id="t110" class="tx" style="top:500.5px;font-size:12px;line-height:16px;letter-spacing:-0.408px;left:666.5px;">Surface</span>
<span id="t111" class="tx" style="top:500.5px;font-size:12px;line-height:16px;letter-spacing:-0.24px;font-kerning:none;right:486.74px;">-2047.112</span>
<span id="t112" class="tx" style="top:500.5px;font-size:12px;line-height:16px;letter-spacing:-0.24px;font-kerning:none;right:406.74px;">-462.827</span>
<span id="t113" class="tx" style="top:500.5px;font-size:12px;line-height:16px;letter-spacing:-0.24px;font-kerning:none;right:326.74px;">-2.000</span>
<span id="t114" class="tx" style="top:500.5px;font-size:12px;line-height:16px;letter-spacing:-0.24px;font-kerning:none;right:266.74px;">2.000</span>
<span id="t115" class="tx" style="top:500.5px;font-size:12px;line-height:16px;letter-spacing:-0.24px;font-kerning:none;right:156.24px;">0.000</span>
<span id="t116" class="tx" style="top:500.5px;font-size:12px;line-height:16px;letter-spacing:-0.24px;font-kerning:none;right:101.24px;">42.648</span>
<span id="t117" class="tx" style="top:500.5px;font-size:12px;line-height:16px;letter-spacing:-0.24px;font-kerning:none;right:37.24px;">2.031</span>
<span id="t118" class="tx" style="top:519.5px;font-size:12px;line-height:16px;left:44.5px;width:0;display:flex;justify-content:center;">1</span>
<span id="t119" class="tx" style="top:519.5px;font-size:12px;line-height:16px;left:113px;width:0;display:flex;justify-content:center;">A4</span>
<span id="t120" class="tx" style="top:519.5px;font-size:12px;line-height:16px;left:193px;width:0;display:flex;justify-content:center;">A/4</span>
<span id="t121" class="tx" style="top:519.5px;font-size:12px;line-height:16px;letter-spacing:-0.408px;left:236.5px;">Surface</span>
<span id="t122" class="tx" style="top:519.5px;font-size:12px;line-height:16px;letter-spacing:-0.24px;font-kerning:none;right:916.74px;">-2025.057</span>
<span id="t123" class="tx" style="top:519.5px;font-size:12px;line-height:16px;letter-spacing:-0.24px;font-kerning:none;right:836.74px;">-455.586</span>
<span id="t124" class="tx g2" style="top:519.5px;font-size:12px;line-height:16px;letter-spacing:-0.24px;font-kerning:none;right:756.74px;">40.000</span>
<span id="t125" class="tx" style="top:519.5px;font-size:12px;line-height:16px;letter-spacing:-0.24px;font-kerning:none;right:701.74px;">80.0</span>
<span id="t126" class="tx" style="top:519.5px;font-size:12px;line-height:16px;letter-spacing:-0.24px;font-kerning:none;right:646.74px;">180.4</span>
<span id="t127" class="tx" style="top:519.5px;font-size:12px;line-height:16px;letter-spacing:-0.408px;left:666.5px;">Surface</span>
<span id="t128" class="tx" style="top:519.5px;font-size:12px;line-height:16px;letter-spacing:-0.24px;font-kerning:none;right:486.74px;">-2025.113</span>
<span id="t129" class="tx" style="top:519.5px;font-size:12px;line-height:16px;letter-spacing:-0.24px;font-kerning:none;right:406.74px;">-462.992</span>
<span id="t130" class="tx" style="top:519.5px;font-size:12px;line-height:16px;letter-spacing:-0.24px;font-kerning:none;right:326.74px;">-2.000</span>
<span id="t131" class="tx" style="top:519.5px;font-size:12px;line-height:16px;letter-spacing:-0.24px;font-kerning:none;right:266.74px;">2.000</span>
<span id="t132" class="tx" style="top:519.5px;font-size:12px;line-height:16px;letter-spacing:-0.24px;font-kerning:none;right:156.24px;">0.000</span>
<span id="t133" class="tx" style="top:519.5px;font-size:12px;line-height:16px;letter-spacing:-0.24px;font-kerning:none;right:101.24px;">42.648</span>
<span id="t134" class="tx" style="top:519.5px;font-size:12px;line-height:16px;letter-spacing:-0.24px;font-kerning:none;right:37.24px;">2.031</span>
<span id="t135" class="tx" style="top:538.5px;font-size:12px;line-height:16px;left:44.5px;width:0;display:flex;justify-content:center;">1</span>
<span id="t136" class="tx" style="top:538.5px;font-size:12px;line-height:16px;left:113px;width:0;display:flex;justify-content:center;">A5</span>
<span id="t137" class="tx" style="top:538.5px;font-size:12px;line-height:16px;left:193px;width:0;display:flex;justify-content:center;">A/5</span>
<span id="t138" class="tx" style="top:538.5px;font-size:12px;line-height:16px;letter-spacing:-0.408px;left:236.5px;">Surface</span>
<span id="t139" class="tx" style="top:538.5px;font-size:12px;line-height:16px;letter-spacing:-0.24px;font-kerning:none;right:916.74px;">-2003.058</span>
<span id="t140" class="tx" style="top:538.5px;font-size:12px;line-height:16px;letter-spacing:-0.24px;font-kerning:none;right:836.74px;">-455.751</span>
<span id="t141" class="tx g2" style="top:538.5px;font-size:12px;line-height:16px;letter-spacing:-0.24px;font-kerning:none;right:756.74px;">40.000</span>
<span id="t142" class="tx" style="top:538.5px;font-size:12px;line-height:16px;letter-spacing:-0.24px;font-kerning:none;right:701.74px;">80.0</span>
<span id="t143" class="tx" style="top:538.5px;font-size:12px;line-height:16px;letter-spacing:-0.24px;font-kerning:none;right:646.74px;">180.4</span>
<span id="t144" class="tx" style="top:538.5px;font-size:12px;line-height:16px;letter-spacing:-0.408px;left:666.5px;">Surface</span>
<span id="t145" class="tx" style="top:538.5px;font-size:12px;line-height:16px;letter-spacing:-0.24px;font-kerning:none;right:486.74px;">-2003.113</span>
<span id="t146" class="tx" style="top:538.5px;font-size:12px;line-height:16px;letter-spacing:-0.24px;font-kerning:none;right:406.74px;">-463.157</span>
<span id="t147" class="tx" style="top:538.5px;font-size:12px;line-height:16px;letter-spacing:-0.24px;font-kerning:none;right:326.74px;">-2.000</span>
<span id="t148" class="tx" style="top:538.5px;font-size:12px;line-height:16px;letter-spacing:-0.24px;font-kerning:none;right:266.74px;">2.000</span>
<span id="t149" class="tx" style="top:538.5px;font-size:12px;line-height:16px;letter-spacing:-0.24px;font-kerning:none;right:156.24px;">0.000</span>
<span id="t150" class="tx" style="top:538.5px;font-size:12px;line-height:16px;letter-spacing:-0.24px;font-kerning:none;right:101.24px;">42.648</span>
<span id="t151" class="tx" style="top:538.5px;font-size:12px;line-height:16px;letter-spacing:-0.24px;font-kerning:none;right:37.24px;">2.031</span>
<span id="t152" class="tx" style="top:557.5px;font-size:12px;line-height:16px;left:44.5px;width:0;display:flex;justify-content:center;">1</span>
<span id="t153" class="tx" style="top:557.5px;font-size:12px;line-height:16px;left:113px;width:0;display:flex;justify-content:center;">A6</span>
<span id="t154" class="tx" style="top:557.5px;font-size:12px;line-height:16px;left:193px;width:0;display:flex;justify-content:center;">A/6</span>
<span id="t155" class="tx" style="top:557.5px;font-size:12px;line-height:16px;letter-spacing:-0.408px;left:236.5px;">Surface</span>
<span id="t156" class="tx" style="top:557.5px;font-size:12px;line-height:16px;letter-spacing:-0.24px;font-kerning:none;right:916.74px;">-1981.058</span>
<span id="t157" class="tx" style="top:557.5px;font-size:12px;line-height:16px;letter-spacing:-0.24px;font-kerning:none;right:836.74px;">-455.916</span>
<span id="t158" class="tx g2" style="top:557.5px;font-size:12px;line-height:16px;letter-spacing:-0.24px;font-kerning:none;right:756.74px;">40.000</span>
<span id="t159" class="tx" style="top:557.5px;font-size:12px;line-height:16px;letter-spacing:-0.24px;font-kerning:none;right:701.74px;">80.0</span>
<span id="t160" class="tx" style="top:557.5px;font-size:12px;line-height:16px;letter-spacing:-0.24px;font-kerning:none;right:646.74px;">180.4</span>
<span id="t161" class="tx" style="top:557.5px;font-size:12px;line-height:16px;letter-spacing:-0.408px;left:666.5px;">Surface</span>
<span id="t162" class="tx" style="top:557.5px;font-size:12px;line-height:16px;letter-spacing:-0.24px;font-kerning:none;right:486.74px;">-1981.114</span>
<span id="t163" class="tx" style="top:557.5px;font-size:12px;line-height:16px;letter-spacing:-0.24px;font-kerning:none;right:406.74px;">-463.322</span>
<span id="t164" class="tx" style="top:557.5px;font-size:12px;line-height:16px;letter-spacing:-0.24px;font-kerning:none;right:326.74px;">-2.000</span>
<span id="t165" class="tx" style="top:557.5px;font-size:12px;line-height:16px;letter-spacing:-0.24px;font-kerning:none;right:266.74px;">2.000</span>
<span id="t166" class="tx" style="top:557.5px;font-size:12px;line-height:16px;letter-spacing:-0.24px;font-kerning:none;right:156.24px;">0.000</span>
<span id="t167" class="tx" style="top:557.5px;font-size:12px;line-height:16px;letter-spacing:-0.24px;font-kerning:none;right:101.24px;">42.648</span>
<span id="t168" class="tx" style="top:557.5px;font-size:12px;line-height:16px;letter-spacing:-0.24px;font-kerning:none;right:37.24px;">2.031</span>
<span id="t169" class="tx" style="top:576.5px;font-size:12px;line-height:16px;left:44.5px;width:0;display:flex;justify-content:center;">1</span>
<span id="t170" class="tx" style="top:576.5px;font-size:12px;line-height:16px;left:113px;width:0;display:flex;justify-content:center;">A7</span>
<span id="t171" class="tx" style="top:576.5px;font-size:12px;line-height:16px;left:193px;width:0;display:flex;justify-content:center;">A/7</span>
<span id="t172" class="tx" style="top:576.5px;font-size:12px;line-height:16px;letter-spacing:-0.408px;left:236.5px;">Surface</span>
<span id="t173" class="tx" style="top:576.5px;font-size:12px;line-height:16px;letter-spacing:-0.24px;font-kerning:none;right:916.74px;">-1959.059</span>
<span id="t174" class="tx" style="top:576.5px;font-size:12px;line-height:16px;letter-spacing:-0.24px;font-kerning:none;right:836.74px;">-456.082</span>
<span id="t175" class="tx g2" style="top:576.5px;font-size:12px;line-height:16px;letter-spacing:-0.24px;font-kerning:none;right:756.74px;">40.000</span>
<span id="t176" class="tx" style="top:576.5px;font-size:12px;line-height:16px;letter-spacing:-0.24px;font-kerning:none;right:701.74px;">80.0</span>
<span id="t177" class="tx" style="top:576.5px;font-size:12px;line-height:16px;letter-spacing:-0.24px;font-kerning:none;right:646.74px;">180.4</span>
<span id="t178" class="tx" style="top:576.5px;font-size:12px;line-height:16px;letter-spacing:-0.408px;left:666.5px;">Surface</span>
<span id="t179" class="tx" style="top:576.5px;font-size:12px;line-height:16px;letter-spacing:-0.24px;font-kerning:none;right:486.74px;">-1959.115</span>
<span id="t180" class="tx" style="top:576.5px;font-size:12px;line-height:16px;letter-spacing:-0.24px;font-kerning:none;right:406.74px;">-463.487</span>
<span id="t181" class="tx" style="top:576.5px;font-size:12px;line-height:16px;letter-spacing:-0.24px;font-kerning:none;right:326.74px;">-2.000</span>
<span id="t182" class="tx" style="top:576.5px;font-size:12px;line-height:16px;letter-spacing:-0.24px;font-kerning:none;right:266.74px;">2.000</span>
<span id="t183" class="tx" style="top:576.5px;font-size:12px;line-height:16px;letter-spacing:-0.24px;font-kerning:none;right:156.24px;">0.000</span>
<span id="t184" class="tx" style="top:576.5px;font-size:12px;line-height:16px;letter-spacing:-0.24px;font-kerning:none;right:101.24px;">42.648</span>
<span id="t185" class="tx" style="top:576.5px;font-size:12px;line-height:16px;letter-spacing:-0.24px;font-kerning:none;right:37.24px;">2.031</span>
</body></html>
